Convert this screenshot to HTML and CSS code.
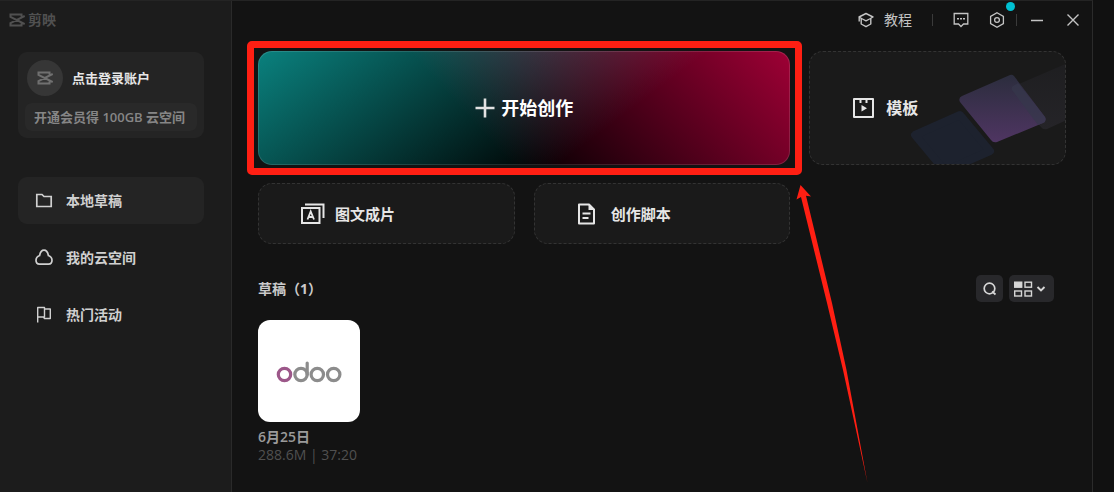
FILE: index.html
```
<!DOCTYPE html>
<html lang="zh-CN">
<head>
<meta charset="utf-8">
<title>剪映</title>
<link rel="stylesheet" href="styles.css">
</head>
<body>
<div class="window">
  <aside class="sidebar">
    <div class="brand">
      <svg class="brand-mark" width="16" height="14" viewBox="0 0 16 14" fill="none" stroke="currentColor" stroke-width="2"><path d="M15.700 3 1.500 10.200V12.400H12.500V10.500M15.700 11 1.500 3.800V1.600H12.500V3.500"/></svg>
      <span>剪映</span>
    </div>
    <section class="account">
      <button class="login" type="button">
        <span class="avatar"><svg width="16" height="14" viewBox="0 0 16 14" fill="none" stroke="currentColor" stroke-width="2"><path d="M15.700 3 1.500 10.200V12.400H12.500V10.500M15.700 11 1.500 3.800V1.600H12.500V3.500"/></svg></span>
        <span>点击登录账户</span>
      </button>
      <a class="promo" href="#vip">开通会员得 100GB 云空间</a>
    </section>
    <nav class="menu">
      <a class="menu-item is-active" href="#local">
        <svg width="18" height="18" viewBox="0 0 18 18" fill="none" stroke="currentColor" stroke-width="1.700"><path d="M1.800 2.500H7L9 4.500H16.200V14.500H1.800Z"/></svg>
        <span>本地草稿</span>
      </a>
      <a class="menu-item" href="#cloud">
        <svg width="18" height="18" viewBox="0 0 18 18" fill="none" stroke="currentColor" stroke-width="1.700"><path d="M4.500 15.200C2.400 15.200 1 13.500 1 11.300C1 9 2.500 7.300 4.600 6.500C5.300 3 6.700 1.200 9 1.200C11.300 1.200 12.700 3 13.400 6.500C15.500 7.300 17 9 17 11.300C17 13.500 15.600 15.200 13.500 15.200Z"/></svg>
        <span>我的云空间</span>
      </a>
      <a class="menu-item" href="#events">
        <svg width="18" height="18" viewBox="0 0 18 18" fill="none" stroke="currentColor" stroke-width="1.400" stroke-linejoin="round"><path d="M2.700 16.500V1.500H9.500V11H2.700M9.500 3H15.300V12.500H9.500L8.500 11"/></svg>
        <span>热门活动</span>
      </a>
    </nav>
  </aside>

  <main class="main">
    <header class="topbar">
      <button class="tutorial" type="button">
        <svg width="16" height="16" viewBox="0 0 16 16" fill="none" stroke="currentColor" stroke-width="1.400" stroke-linejoin="round"><path d="M8 1.500 15 5 11.500 7 8 8.800 4.500 7 1 5ZM3.200 6.500V12L8 14.700 12.800 12V6.500M1.200 5V9.500"/></svg>
        <span>教程</span>
      </button>
      <span class="divider"></span>
      <button class="icon-button feedback" type="button" aria-label="反馈">
        <svg width="16" height="16" viewBox="0 0 16 16" fill="none" stroke="currentColor" stroke-width="1.300"><path d="M1.200 1.500H14.800V12H10.500L8 14.500 5.500 12H1.200Z"/><path d="M4 6.800H6M7 6.800H9M10 6.800H12" stroke-width="1.600"/></svg>
      </button>
      <button class="icon-button settings" type="button" aria-label="设置">
        <svg width="16" height="16" viewBox="0 0 16 16" fill="none" stroke="currentColor" stroke-width="1.300"><path d="M8 .8 14.400 4.400V11.600L8 15.200 1.600 11.600V4.400Z"/><circle cx="8" cy="8" r="2.400"/></svg>
        <span class="dot"></span>
      </button>
      <span class="divider divider-tight"></span>
      <button class="icon-button minimize" type="button" aria-label="最小化">
        <svg width="12" height="12" viewBox="0 0 12 12" stroke="currentColor" stroke-width="1.500"><path d="M0 6.500H12"/></svg>
      </button>
      <button class="icon-button" type="button" aria-label="关闭">
        <svg width="12" height="12" viewBox="0 0 12 12" stroke="currentColor" stroke-width="1.400"><path d="M.5.5 11.500 11.500M11.500.5.5 11.500"/></svg>
      </button>
    </header>

    <section class="actions">
      <div class="hero-wrap">
        <button class="hero" type="button">
          <svg width="20" height="20" viewBox="0 0 20 20" stroke="#e2e2e2" stroke-width="2.600"><path d="M10 .5V19.500M.5 10H19.500"/></svg>
          <span>开始创作</span>
        </button>
        <span class="highlight"></span>
        <svg class="arrow" width="80" height="300" viewBox="0 0 80 300"><path fill="#ff1f13" d="M10.500 0 21 11.500 16 10.800 42 118 56.500 185 77.500 298 53 185 37 118 11 12 6.500 14.500Z"/></svg>
      </div>
      <button class="card card-template" type="button">
        <svg class="tiles" width="160" height="112" viewBox="0 0 160 112" stroke-width="8" stroke-linejoin="round">
          <defs>
            <linearGradient id="tile" x1="0" y1="0" x2="0" y2="1"><stop offset="0" stop-color="#2b2d3d"/><stop offset="1" stop-color="#4f3562"/></linearGradient>
            <linearGradient id="tile-back" x1="0" y1="1" x2="0" y2="0"><stop offset="0" stop-color="#252428"/><stop offset="1" stop-color="#1e1e20"/></linearGradient>
          </defs>
          <path d="M109 34 170 8V64L142 77Q138 78 136 75L107 40Q106 36 109 34Z" fill="url(#tile-back)" stroke="none"/>
          <path d="M10 83 55 63 85 99 40 119Z" fill="#1d222e" stroke="#1d222e"/>
          <path d="M105 23Q107 22 109 24L140 65Q142 69 138 71L92 90Q88 91 86 88L55 50Q53 46 57 44Z" fill="url(#tile)" stroke="none"/>
          <path d="M108 34 113 31 140 65Q142 69 138 71L133 73 107 38Q106 35 108 34Z" fill="#36384c" opacity=".7" stroke="none"/>
        </svg>
        <svg width="24" height="24" viewBox="0 0 24 24" fill="none" stroke="currentColor" stroke-width="2" stroke-linejoin="round"><path d="M2 3H21V21H2ZM8.500 3V7M14.500 3V7"/><path d="M9.500 9V15.500L15 12.300Z" fill="currentColor" stroke="none"/></svg>
        <span>模板</span>
      </button>
      <button class="card" type="button">
        <svg width="24" height="24" viewBox="0 0 24 24" fill="none" stroke="currentColor" stroke-width="2"><path d="M1 6H18.500V21H1ZM4 2.500H22.500V16"/><path d="M6.500 17.500 9.700 9.500 13 17.500M7.700 15H11.800" stroke-width="1.800"/></svg>
        <span>图文成片</span>
      </button>
      <button class="card" type="button">
        <svg width="24" height="24" viewBox="0 0 24 24" fill="none" stroke="currentColor" stroke-width="2" stroke-linejoin="round"><path d="M2 2.500H12L17 7.500V21.500H2ZM5.500 11.500H13.500M5.500 16H11.500"/><path d="M11.500 2.500V8H17Z" fill="currentColor" stroke="none"/></svg>
        <span>创作脚本</span>
      </button>
    </section>

    <section class="drafts">
      <div class="drafts-head">
        <h2>草稿（1）</h2>
        <div class="tools">
          <button class="tool" type="button" aria-label="搜索">
            <svg width="14" height="14" viewBox="0 0 14 14" fill="none" stroke="currentColor" stroke-width="1.700"><circle cx="6.500" cy="6.500" r="5.300"/><path d="M9 9.500 12.500 12.500"/></svg>
          </button>
          <button class="tool tool-view" type="button" aria-label="视图">
            <svg width="36" height="16" viewBox="0 0 36 16" fill="none" stroke="currentColor" stroke-width="1.400"><rect x=".7" y="1.200" width="7" height="5" fill="currentColor"/><rect x="11" y="1.200" width="6.500" height="5"/><rect x=".7" y="10" width="6.800" height="5"/><rect x="11" y="10" width="6.500" height="5"/><path d="M23.500 6 27 9.500 30.500 6" stroke-width="1.900"/></svg>
          </button>
        </div>
      </div>
      <a class="draft" href="#draft">
        <span class="thumb">
          <svg width="66" height="24" viewBox="0 -1 66 24" fill="none" stroke="#8c8c8c" stroke-width="3.200" role="img" aria-label="odoo"><circle cx="8.500" cy="14.500" r="6.200" stroke="#9c5789"/><circle cx="25" cy="14.500" r="6.200"/><path d="M31.200 3V14.500" stroke-linecap="round"/><circle cx="41.300" cy="14.500" r="6.200"/><circle cx="57.700" cy="14.500" r="6.200"/></svg>
        </span>
        <span class="draft-name">6月25日</span>
        <span class="draft-meta">288.6M | 37:20</span>
      </a>
    </section>
  </main>
</div>
</body>
</html>
```

FILE: styles.css
```
* { box-sizing: border-box; }

body {
  margin: 0;
  background: #111;
  color: #ddd;
  font-family: "Open Sans", "Noto Sans CJK SC", sans-serif;
  font-size: 14px;
  line-height: 18px;
}

button {
  margin: 0;
  padding: 0;
  border: 0;
  background: none;
  color: inherit;
  font: inherit;
  cursor: pointer;
}

a { color: inherit; text-decoration: none; }
svg { display: block; flex: none; }

.window {
  display: flex;
  min-height: 100vh;
  margin-right: 21px;
  border-top: 1px solid #242424;
  border-right: 1px solid #2b2b2b;
  background: #131313;
}

/* Sidebar */
.sidebar {
  flex: none;
  width: 232px;
  padding: 10px 27px 20px 18px;
  border-right: 1px solid #2a2a2a;
  background: #1c1c1c;
}

.brand {
  display: flex;
  align-items: center;
  gap: 3px;
  margin-left: -9px;
  color: #505050;
  font-weight: 700;
}

.account {
  margin-top: 23px;
  padding: 8px 7px 7px;
  border-radius: 9px;
  background: #242424;
}

.login {
  display: flex;
  align-items: center;
  gap: 9px;
  padding-left: 2px;
  color: #e6e6e6;
  font-size: 13px;
  font-weight: 700;
}

.avatar {
  display: grid;
  place-items: center;
  width: 36px;
  height: 36px;
  border-radius: 50%;
  background: #363636;
  color: #707070;
}

.promo {
  display: block;
  margin-top: 7px;
  padding: 5px 9px;
  border-radius: 7px;
  background: #292929;
  color: #868686;
  font-size: 13px;
  font-weight: 600;
  white-space: nowrap;
}

.menu {
  display: grid;
  gap: 10px;
  margin-top: 39px;
}

.menu-item {
  display: flex;
  align-items: center;
  gap: 13px;
  height: 47px;
  padding-left: 17px;
  border-radius: 9px;
  color: #d0d0d0;
  font-weight: 700;
}

.is-active { background: #242424; }

/* Main pane */
.main {
  flex: 1;
  min-width: 0;
  padding: 0 26px 20px;
}

.topbar {
  display: flex;
  align-items: center;
  justify-content: flex-end;
  height: 38px;
  margin-right: -13px;
  color: #c4c4c4;
}

.tutorial { display: flex; align-items: center; gap: 10px; }
.divider { width: 1px; height: 12px; margin: 0 20px; background: #3a3a3a; }
.divider-tight { margin: 0 14px 0 11px; }
.feedback { margin-right: 20px; }
.minimize { margin-right: 24px; }
.settings { position: relative; }

.dot {
  position: absolute;
  top: -10px;
  right: -10px;
  width: 9px;
  height: 9px;
  border-radius: 50%;
  background: #00c1d2;
}

.actions {
  display: grid;
  grid-template-columns: repeat(3, 1fr);
  gap: 18px 19px;
  margin-top: 12px;
}

.hero-wrap { position: relative; grid-column: span 2; }

.hero {
  display: flex;
  align-items: center;
  justify-content: center;
  gap: 6px;
  width: 100%;
  height: 114px;
  border: 1px solid #ffffff20;
  border-radius: 14px;
  background:
    linear-gradient(143deg, #0a817e 0%, #000 66%) border-box,
    linear-gradient(48deg, #000 40%, #9e0035 100%) border-box;
  background-blend-mode: screen;
  color: #fff;
  font-size: 18px;
  font-weight: 700;
}

.highlight {
  position: absolute;
  inset: -10px -12px -10px -11px;
  border: 7px solid #ff1f13;
  border-radius: 5px;
  pointer-events: none;
}

.arrow {
  position: absolute;
  top: 134px;
  left: 100%;
  z-index: 1;
  pointer-events: none;
}

.card {
  position: relative;
  display: flex;
  align-items: center;
  gap: 10px;
  min-height: 61px;
  padding-left: 42px;
  overflow: hidden;
  border: 1px dashed #333;
  border-radius: 14px;
  background: #1a1a1a;
  color: #e6e6e6;
  font-size: 15px;
  font-weight: 700;
}

.card-template { font-size: 16px; }

.tiles { position: absolute; right: 0; bottom: 0; }

/* Drafts */
.drafts { margin-top: 31px; }

.drafts-head {
  display: flex;
  align-items: center;
  justify-content: space-between;
  padding-right: 12px;
}

.drafts-head h2 {
  margin: 0;
  color: #cacaca;
  font-size: 14px;
  font-weight: 700;
}

.tools { display: flex; gap: 6px; }

.tool {
  display: grid;
  place-items: center;
  width: 27px;
  height: 27px;
  border-radius: 5px;
  background: #28282b;
  color: #d6d6d6;
}

.tool-view { width: 45px; }

.draft {
  display: inline-flex;
  flex-direction: column;
  margin-top: 18px;
}

.thumb {
  display: grid;
  place-items: center;
  width: 102px;
  height: 102px;
  margin-bottom: 6px;
  border-radius: 12px;
  background: #fff;
}

.draft-name { color: #9a9a9a; font-weight: 600; }
.draft-meta { color: #505050; }
```
